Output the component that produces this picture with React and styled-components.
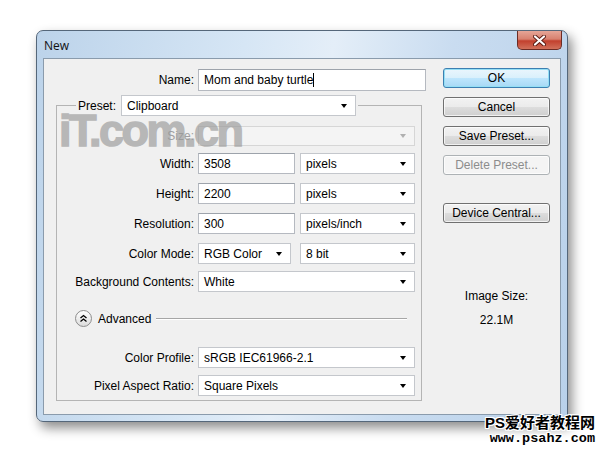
import React from 'react'
import styled, { createGlobalStyle } from 'styled-components'

const Global = createGlobalStyle`
  body{
    margin:0;
    background:#fff;
    font-family:"Liberation Sans", Arial, sans-serif;
    font-size:12px;
    color:#000;
  }
`

const Stage = styled.div`
  position:relative;
  width:600px;
  height:450px;
  box-sizing:border-box;
  padding:30px 0 0 36px;
  overflow:hidden;
`

const Window = styled.div`
  width:532px;
  height:392px;
  box-sizing:border-box;
  border:1px solid #55677a;
  border-radius:7px;
  background:linear-gradient(100deg,#bcd3ea 0%,#d6e6f5 35%,#e4eef8 50%,#c9dcf0 70%,#b9d1ea 100%);
  box-shadow:4px 6px 12px rgba(0,0,0,0.45);
  display:flex;
  flex-direction:column;
`

const TitleBar = styled.div`
  height:27px;
  display:flex;
  justify-content:space-between;
  align-items:flex-start;
  padding:0 5px 0 7px;
`

const Title = styled.span`
  margin-top:6px;
  font-family:"Open Sans","Liberation Sans",sans-serif;
  font-size:12px;
  color:#111;
`

const CloseBtn = styled.div`
  width:45px;
  height:19px;
  box-sizing:border-box;
  border:1px solid #6b2c25;
  border-top:none;
  border-radius:0 0 5px 5px;
  background:linear-gradient(#e6a597 0%,#d8816f 45%,#c2402e 55%,#d1705a 100%);
  display:flex;
  align-items:center;
  justify-content:center;
`

const Client = styled.div`
  flex:1;
  margin:0 6px 6px;
  border:1px solid #8a9bac;
  background:#f0f0f0;
  display:flex;
  position:relative;
`

const LeftCol = styled.div`
  width:382px;
  padding-top:10px;
`

const RightCol = styled.div`
  width:107px;
  margin-left:17px;
  padding-top:9px;
  display:flex;
  flex-direction:column;
`

const Row = styled.div`
  display:flex;
  align-items:center;
  margin-top:${p => p.$top || 0}px;
`

const Label = styled.span`
  width:${p => p.$w}px;
  flex:none;
  text-align:right;
  margin-right:4px;
  white-space:nowrap;
  color:${p => (p.$disabled ? '#a0a0a0' : '#000')};
`

const Input = styled.div`
  width:${p => p.$w}px;
  height:${p => p.$h || 21}px;
  box-sizing:border-box;
  border:1px solid #b5b9c0;
  border-top-color:#9da3ab;
  background:#fff;
  padding-left:5px;
  display:flex;
  align-items:center;
  white-space:nowrap;
`

const Caret = styled.span`
  display:inline-block;
  width:1px;
  height:14px;
  background:#000;
`

const SelectBox = styled.div`
  width:${p => p.$w}px;
  height:${p => p.$h || 21}px;
  box-sizing:border-box;
  margin-left:${p => p.$gap || 0}px;
  border:1px solid ${p => (p.$disabled ? '#d6d6d6' : '#c4c7cc')};
  background:${p => (p.$disabled ? '#f4f4f4' : '#fff')};
  padding:0 8px 0 5px;
  display:flex;
  align-items:center;
  justify-content:space-between;
  white-space:nowrap;
  &::after{
    content:'';
    border-left:3.5px solid transparent;
    border-right:3.5px solid transparent;
    border-top:4px solid ${p => (p.$disabled ? '#b0b0b0' : '#000')};
  }
`

const Group = styled.fieldset`
  margin:4px 0 0 12px;
  padding:0 0 4px 0;
  width:366px;
  box-sizing:border-box;
  border:1px solid #b4b4b4;
  min-width:0;
`

const Legend = styled.legend`
  margin-left:19px;
  padding:0 2px;
`

const LegendInner = styled.div`
  display:flex;
  align-items:center;
  gap:5px;
`

const AdvRow = styled.div`
  display:flex;
  align-items:center;
  margin:18px 14px 0 18px;
  height:17px;
`

const RoundBtn = styled.div`
  width:17px;
  height:17px;
  box-sizing:border-box;
  border-radius:50%;
  border:1px solid #8d8d8d;
  background:linear-gradient(#ffffff,#dcdcdc);
  display:flex;
  align-items:center;
  justify-content:center;
`

const AdvText = styled.span`
  margin-left:6px;
`

const Rule = styled.div`
  flex:1;
  height:1px;
  margin-left:5px;
  background:#a6a6a6;
  border-bottom:1px solid #fff;
`

const Button = styled.div`
  height:20px;
  box-sizing:border-box;
  margin-top:${p => p.$top || 0}px;
  border:1px solid ${p => (p.$primary ? '#3c7fb1' : p.$disabled ? '#adb2b5' : '#707070')};
  border-radius:3px;
  background:${p =>
    p.$primary
      ? 'linear-gradient(#eaf6fd 0%,#d9f0fc 50%,#bee6fd 51%,#a7d9f5 100%)'
      : p.$disabled
      ? '#f4f4f4'
      : 'linear-gradient(#f2f2f2 0%,#ebebeb 50%,#dddddd 51%,#cfcfcf 100%)'};
  box-shadow:${p => (p.$primary ? 'inset 0 0 0 1px #94dff5' : 'inset 0 0 0 1px rgba(255,255,255,0.7)')};
  color:${p => (p.$disabled ? '#8c8c8c' : '#000')};
  display:flex;
  align-items:center;
  justify-content:center;
  white-space:nowrap;
`

const SizeInfo = styled.div`
  margin-top:${p => p.$top}px;
  text-align:center;
  line-height:14px;
`

const Watermark = styled.div`
  position:absolute;
  left:15px;
  top:49px;
  font-family:"Liberation Sans", Arial, sans-serif;
  font-weight:700;
  font-size:45px;
  letter-spacing:-2.5px;
  line-height:1;
  color:#999;
  -webkit-text-stroke:1.5px #999;
  opacity:0.65;
  pointer-events:none;
`

const Stamp = styled.div`
  position:absolute;
  right:5px;
  bottom:3px;
  display:flex;
  flex-direction:column;
  align-items:flex-end;
  font-weight:700;
  color:#000;
  text-shadow:1px 0 #fff,-1px 0 #fff,0 1px #fff,0 -1px #fff,1px 1px #fff,-1px -1px #fff,1px -1px #fff,-1px 1px #fff;
`

const StampTop = styled.span`
  font-family:"Liberation Sans","Noto Sans CJK SC",sans-serif;
  font-size:15px;
  line-height:17px;
`

const StampBottom = styled.span`
  font-family:"Liberation Mono",monospace;
  font-size:13.5px;
  line-height:16px;
`

const Select = ({ w, h, gap, disabled, children }) => (
  <SelectBox $w={w} $h={h} $gap={gap} $disabled={disabled}>
    <span>{children}</span>
  </SelectBox>
)

const App = () => {
  return (
    <Stage>
      <Global />
      <Window>
        <TitleBar>
          <Title>New</Title>
          <CloseBtn>
            <svg width="13" height="11" viewBox="0 0 13 11">
              <path d="M2 1.5 L11 9.5 M11 1.5 L2 9.5" stroke="#5a1a12" strokeWidth="4" strokeLinecap="round" />
              <path d="M2 1.5 L11 9.5 M11 1.5 L2 9.5" stroke="#fff" strokeWidth="2.2" strokeLinecap="round" />
            </svg>
          </CloseBtn>
        </TitleBar>
        <Client>
          <LeftCol>
            <Row>
              <Label $w={150}>Name:</Label>
              <Input $w={228} $h={22}>
                Mom and baby turtle<Caret />
              </Input>
            </Row>
            <Group>
              <Legend>
                <LegendInner>
                  <span>Preset:</span>
                  <Select w={235}>Clipboard</Select>
                </LegendInner>
              </Legend>
              <Row $top={10}>
                <Label $w={137} $disabled>Size:</Label>
                <Select w={217} h={20} disabled></Select>
              </Row>
              <Row $top={7}>
                <Label $w={137}>Width:</Label>
                <Input $w={97}>3508</Input>
                <Select w={115} gap={5}>pixels</Select>
              </Row>
              <Row $top={9}>
                <Label $w={137}>Height:</Label>
                <Input $w={97}>2200</Input>
                <Select w={115} gap={5}>pixels</Select>
              </Row>
              <Row $top={9}>
                <Label $w={137}>Resolution:</Label>
                <Input $w={97}>300</Input>
                <Select w={115} gap={5}>pixels/inch</Select>
              </Row>
              <Row $top={9}>
                <Label $w={137}>Color Mode:</Label>
                <Select w={93}>RGB Color</Select>
                <Select w={115} gap={9}>8 bit</Select>
              </Row>
              <Row $top={7}>
                <Label $w={137}>Background Contents:</Label>
                <Select w={217}>White</Select>
              </Row>
              <AdvRow>
                <RoundBtn>
                  <svg width="9" height="9" viewBox="0 0 9 9">
                    <path d="M1.5 4 L4.5 1.5 L7.5 4 M1.5 7.5 L4.5 5 L7.5 7.5" fill="none" stroke="#000" strokeWidth="1.3" />
                  </svg>
                </RoundBtn>
                <AdvText>Advanced</AdvText>
                <Rule />
              </AdvRow>
              <Row $top={20}>
                <Label $w={137}>Color Profile:</Label>
                <Select w={217}>sRGB IEC61966-2.1</Select>
              </Row>
              <Row $top={7}>
                <Label $w={137}>Pixel Aspect Ratio:</Label>
                <Select w={217}>Square Pixels</Select>
              </Row>
            </Group>
          </LeftCol>
          <RightCol>
            <Button $primary>OK</Button>
            <Button $top={9}>Cancel</Button>
            <Button $top={9}>Save Preset...</Button>
            <Button $top={9} $disabled>Delete Preset...</Button>
            <Button $top={28}>Device Central...</Button>
            <SizeInfo $top={66}>Image Size:</SizeInfo>
            <SizeInfo $top={10}>22.1M</SizeInfo>
          </RightCol>
          <Watermark>iT.com.cn</Watermark>
        </Client>
      </Window>
      <Stamp>
        <StampTop>PS爱好者教程网</StampTop>
        <StampBottom>www.psahz.com</StampBottom>
      </Stamp>
    </Stage>
  )
}

export default App
